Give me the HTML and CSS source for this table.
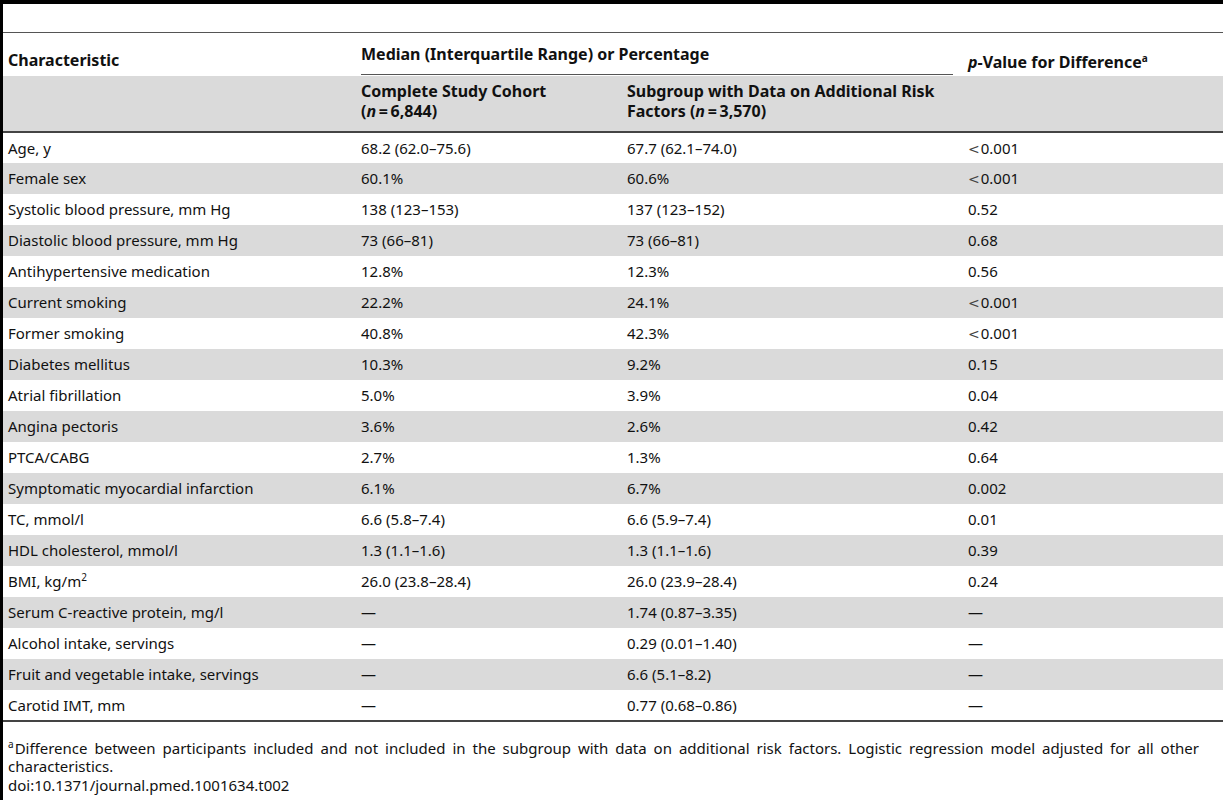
FILE: index.html
```html
<!DOCTYPE html>
<html>
<head>
<meta charset="utf-8">
<link rel="stylesheet" href="styles.css">
</head>
<body>
<div class="frame">
  <div class="spacer"></div>
  <table class="tbl">
    <colgroup>
      <col class="c1"><col class="c2"><col class="c3"><col class="c4">
    </colgroup>
    <thead>
      <tr class="h1">
        <th class="char">Characteristic</th>
        <th class="median" colspan="2"><div class="median-in">Median (Interquartile Range) or Percentage</div></th>
        <th class="pval"><i>p</i>-Value for Difference<sup>a</sup></th>
      </tr>
      <tr class="h2">
        <th></th>
        <th>Complete Study Cohort<br>(<i>n</i>&thinsp;=&thinsp;6,844)</th>
        <th>Subgroup with Data on Additional Risk<br>Factors (<i>n</i>&thinsp;=&thinsp;3,570)</th>
        <th></th>
      </tr>
    </thead>
    <tbody>
      <tr><td>Age, y</td><td>68.2 (62.0–75.6)</td><td>67.7 (62.1–74.0)</td><td><span class="lt">&lt;</span>0.001</td></tr>
      <tr><td>Female sex</td><td>60.1%</td><td>60.6%</td><td><span class="lt">&lt;</span>0.001</td></tr>
      <tr><td>Systolic blood pressure, mm Hg</td><td>138 (123–153)</td><td>137 (123–152)</td><td>0.52</td></tr>
      <tr><td>Diastolic blood pressure, mm Hg</td><td>73 (66–81)</td><td>73 (66–81)</td><td>0.68</td></tr>
      <tr><td>Antihypertensive medication</td><td>12.8%</td><td>12.3%</td><td>0.56</td></tr>
      <tr><td>Current smoking</td><td>22.2%</td><td>24.1%</td><td><span class="lt">&lt;</span>0.001</td></tr>
      <tr><td>Former smoking</td><td>40.8%</td><td>42.3%</td><td><span class="lt">&lt;</span>0.001</td></tr>
      <tr><td>Diabetes mellitus</td><td>10.3%</td><td>9.2%</td><td>0.15</td></tr>
      <tr><td>Atrial fibrillation</td><td>5.0%</td><td>3.9%</td><td>0.04</td></tr>
      <tr><td>Angina pectoris</td><td>3.6%</td><td>2.6%</td><td>0.42</td></tr>
      <tr><td>PTCA/CABG</td><td>2.7%</td><td>1.3%</td><td>0.64</td></tr>
      <tr><td>Symptomatic myocardial infarction</td><td>6.1%</td><td>6.7%</td><td>0.002</td></tr>
      <tr><td>TC, mmol/l</td><td>6.6 (5.8–7.4)</td><td>6.6 (5.9–7.4)</td><td>0.01</td></tr>
      <tr><td>HDL cholesterol, mmol/l</td><td>1.3 (1.1–1.6)</td><td>1.3 (1.1–1.6)</td><td>0.39</td></tr>
      <tr><td>BMI, kg/m<sup>2</sup></td><td>26.0 (23.8–28.4)</td><td>26.0 (23.9–28.4)</td><td>0.24</td></tr>
      <tr><td>Serum C-reactive protein, mg/l</td><td>—</td><td>1.74 (0.87–3.35)</td><td>—</td></tr>
      <tr><td>Alcohol intake, servings</td><td>—</td><td>0.29 (0.01–1.40)</td><td>—</td></tr>
      <tr><td>Fruit and vegetable intake, servings</td><td>—</td><td>6.6 (5.1–8.2)</td><td>—</td></tr>
      <tr><td>Carotid IMT, mm</td><td>—</td><td>0.77 (0.68–0.86)</td><td>—</td></tr>
    </tbody>
  </table>
  <div class="foot">
    <p class="note"><sup class="fn">a</sup>Difference between participants included and not included in the subgroup with data on additional risk factors. Logistic regression model adjusted for all other characteristics.</p>
    <p>doi:10.1371/journal.pmed.1001634.t002</p>
  </div>
</div>
</body>
</html>
```

FILE: styles.css
```css
* { box-sizing: border-box; }
html, body {
  margin: 0;
  padding: 0;
  background: #fff;
}
body {
  font-family: "Noto Sans", "Open Sans", sans-serif;
  font-size: 15px;
  color: #111;
}
.frame {
  width: 1223px;
  height: 800px;
  border-left: 3px solid #000;
  border-top: 4px solid #000;
  overflow: hidden;
}
.spacer { height: 28px; }
.tbl {
  width: 100%;
  table-layout: fixed;
  border-collapse: collapse;
  border-top: 1px solid #555;
  border-bottom: 2px solid #444;
}
.c1 { width: 353px; }
.c2 { width: 266px; }
.c3 { width: 341px; }
.c4 { width: 260px; }
th {
  font-weight: bold;
  font-size: 16px;
  text-align: left;
  padding: 0 5px;
  vertical-align: top;
  line-height: 20px;
  white-space: nowrap;
}
.h1 { height: 43px; }
.h1 th { padding-top: 17px; }
.h1 th.median { padding-top: 11px; padding-right: 10px; padding-bottom: 0; }
.median-in {
  border-bottom: 1px solid #555;
  padding-bottom: 10px;
}
.h1 th.pval { padding-top: 19px; }
.h2 { background: #dadada; height: 56px; border-bottom: 2px solid #444; }
.h2 th { padding-top: 5px; }
sup {
  font-size: 10px;
  line-height: 0;
  vertical-align: 6px;
}
.fn { margin-right: 1px; }
td {
  height: 31px;
  padding: 0 5px;
  line-height: 20px;
  vertical-align: middle;
  white-space: nowrap;
}
tbody tr { height: 31px; }
tbody tr:nth-child(even) { background: #dadada; }
.lt {
  font-family: "DejaVu Sans", sans-serif;
  font-size: 14px;
  line-height: 1;
  color: #444;
  margin-right: 1px;
}
.foot {
  padding: 17px 24px 0 5px;
  line-height: 18.5px;
}
.foot p { margin: 0; }
.note { text-align: justify; }
```
